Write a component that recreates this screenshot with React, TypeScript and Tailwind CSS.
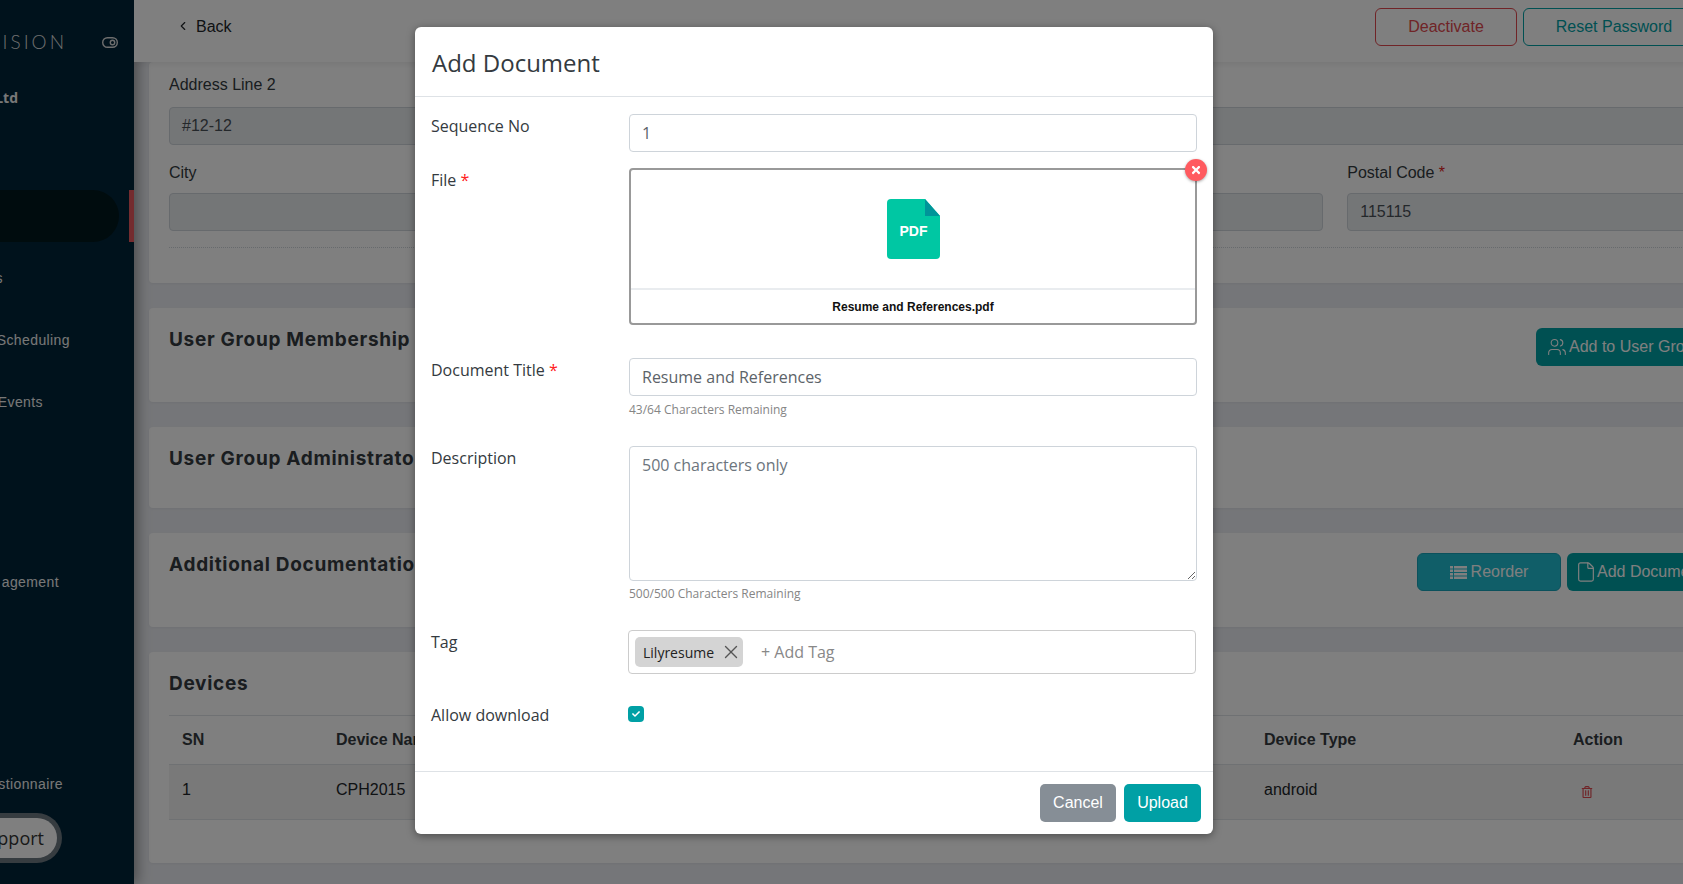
import { ChevronLeft, File, Users, X } from "lucide-react";
import { FaCheck, FaRegTrashAlt, FaTimes } from "react-icons/fa";

const sans = "font-['Liberation_Sans',Arial,sans-serif]";
const open = "font-['Open_Sans',sans-serif]";
const heading = "font-['Inter',sans-serif] font-bold text-[19px] tracking-[0.7px] text-[#343a40]";
const tableCols = "grid-cols-[154px_928px_309px_1fr]";

const SideItem = ({ label, className }: { label: string; className: string }) => (
    <div className={`flex justify-end whitespace-nowrap text-[14px] tracking-[0.4px] text-[#f0f0f0] ${className}`}>
        {label}
    </div>
);

const Sidebar = () => (
    <aside className={`w-[134px] shrink-0 h-full bg-[#002438] overflow-hidden flex flex-col ${sans} shadow-[4px_0_12px_rgba(0,0,0,0.35)] relative`}>
        <div className="h-[62px] pt-[22px] flex justify-end items-center gap-[35px] pr-[16px] text-[#ddd]">
            <span className="font-['Lato',sans-serif] font-light text-[19px] leading-[26px] tracking-[3px] whitespace-nowrap">
                VISION
            </span>
            <svg className="shrink-0" width="16" height="11" viewBox="0 0 16 11" fill="none" stroke="currentColor" strokeWidth="1.4">
                <rect x="0.7" y="0.7" width="14.6" height="9.6" rx="4.8" />
                <circle cx="10.5" cy="5.5" r="2.2" />
            </svg>
        </div>
        <div className="flex justify-end pr-[116px] mt-[26px] font-['Open_Sans',sans-serif] font-bold text-[14px] text-[#f0f0f0] leading-5 whitespace-nowrap">
            Ltd
        </div>
        <div className="mt-[82px] h-[52px] flex shrink-0">
            <div className="w-[119px] h-full rounded-r-[26px] bg-[#00181c]" />
            <div className="ml-[10px] w-[5px] h-full bg-[#e8585e]" />
        </div>
        <SideItem label="s" className="mt-[26px] pr-[131px] leading-5" />
        <SideItem label="Scheduling" className="mt-[42px] pr-[64px] leading-5" />
        <SideItem label="Events" className="mt-[42px] pr-[91px] leading-5" />
        <SideItem label="agement" className="mt-[160px] pr-[75px] leading-5" />
        <SideItem label="stionnaire" className="mt-[182px] pr-[71px] leading-5" />
    </aside>
);

const Field = ({ label, value, required }: { label?: string; value?: string; required?: boolean }) => (
    <div>
        <div className="h-6 leading-6 mb-[8px] text-[16px] text-[#333a40]">
            {label}
            {required && <span className="text-[#e02020]"> *</span>}
        </div>
        <div className="h-[38px] rounded-[4px] border border-[#ced4da] bg-[#e9ecef] px-3 leading-[36px] text-[16px] text-[#495057]">
            {value}
        </div>
    </div>
);

const Card = ({ className, children }: { className: string; children: React.ReactNode }) => (
    <section className={`w-[1587px] ml-[15px] bg-white rounded-[4px] px-5 shadow-[0_1px_3px_rgba(0,0,0,0.05)] ${className}`}>
        {children}
    </section>
);

const ReorderIcon = () => (
    <svg width="17" height="13" viewBox="0 0 17 13" fill="currentColor">
        <path d="M0 0h3v2.5H0zM4 0h13v2.5H4zM0 3.5h3V6H0zM4 3.5h13V6H4zM0 7h3v2.5H0zM4 7h13v2.5H4zM0 10.5h3V13H0zM4 10.5h13V13H4z" />
    </svg>
);

const Main = () => (
    <main className={`flex-1 min-w-0 overflow-hidden h-full bg-[#ebedf2] ${sans}`}>
        <header className="w-[1571px] h-[62px] bg-white flex items-center justify-between shadow-[0_2px_6px_rgba(0,0,0,0.08)] relative">
            <div className="flex items-center ml-[42px] mt-[-8px] text-[16px] text-[#212529]">
                <ChevronLeft size={14} strokeWidth={2} className="mr-[6px] -mt-[3px]" />
                Back
            </div>
            <div className="flex gap-[6px] -mt-[9px] text-[16px]">
                <div className="w-[142px] h-[38px] rounded-[6px] border border-[#e0484e] text-[#e0484e] flex items-center justify-center">
                    Deactivate
                </div>
                <div className="w-[182px] h-[38px] rounded-[6px] border border-[#00a0a5] text-[#00a0a5] flex items-center justify-center">
                    Reset Password
                </div>
            </div>
        </header>

        <Card className="h-[221px] pt-[11px]">
            <div className="h-6 leading-6 mb-[10px] text-[16px] text-[#333a40]">Address Line 2</div>
            <div className="h-[38px] rounded-[4px] border border-[#ced4da] bg-[#e9ecef] px-3 leading-[36px] text-[16px] text-[#495057]">
                #12-12
            </div>
            <div className="grid grid-cols-4 gap-x-6 mt-[16px]">
                <Field label="City" />
                <Field />
                <Field />
                <Field label="Postal Code" value="115115" required />
            </div>
            <div className="mt-[16px] border-t border-dotted border-[#ced4da]" />
        </Card>

        <Card className="mt-[25px] h-[94px] pt-[18px] flex justify-between">
            <h2 className={heading}>User Group Membership</h2>
            <div className="w-[180px] h-[38px] mt-[2px] rounded-[6px] bg-[#00a0a5] text-white text-[16px] flex items-center gap-[2px] pl-[11px] whitespace-nowrap overflow-hidden">
                <Users size={20} strokeWidth={1.3} className="shrink-0" />
                Add to User Group
            </div>
        </Card>

        <Card className="mt-[25px] h-[81px] pt-[18px]">
            <h2 className={heading}>User Group Administrator</h2>
        </Card>

        <Card className="mt-[25px] h-[94px] pt-[18px] flex justify-between">
            <h2 className={heading}>Additional Documentation</h2>
            <div className="flex gap-[6px] mt-[2px] text-white text-[16px]">
                <div className="w-[144px] h-[38px] rounded-[6px] bg-[#21bcd0] border border-[#17a2b8] flex items-center justify-center gap-[4px]">
                    <ReorderIcon />
                    Reorder
                </div>
                <div className="w-[149px] h-[38px] rounded-[6px] bg-[#00a0a5] flex items-center pl-[8px] whitespace-nowrap">
                    <File size={22} strokeWidth={1.3} className="shrink-0" />
                    Add Document
                </div>
            </div>
        </Card>

        <Card className="mt-[25px] h-[211px] pt-[18px]">
            <h2 className={heading}>Devices</h2>
            <div className="mt-[16px] border-t border-[#dee2e6]">
                <div className={`grid ${tableCols} h-[48px] items-center pl-[13px] font-bold text-[16px] text-[#343a40]`}>
                    <span>SN</span>
                    <span>Device Name</span>
                    <span>Device Type</span>
                    <span>Action</span>
                </div>
                <div className={`grid ${tableCols} h-[56px] items-center pl-[13px] bg-[#f2f2f2] border-y border-[#dee2e6] text-[16px] text-[#212529]`}>
                    <span className="-mt-[4px]">1</span>
                    <span className="-mt-[4px]">CPH2015</span>
                    <span className="-mt-[4px]">android</span>
                    <span className="pl-[8px] text-[#e0484e]">
                        <FaRegTrashAlt size={12} />
                    </span>
                </div>
            </div>
        </Card>
    </main>
);

const Required = () => <span className="text-[#ff2020]"> *</span>;

const FormRow = ({ label, required, className, children }: { label: string; required?: boolean; className?: string; children: React.ReactNode }) => (
    <div className={`grid grid-cols-[198px_1fr] ${className ?? ""}`}>
        <label className="leading-6 text-[16px] text-[#343a40]">
            {label}
            {required && <Required />}
        </label>
        <div>{children}</div>
    </div>
);

const inputClass = "block w-full h-[38px] rounded-[4px] border border-[#ced4da] px-3 text-[16px] text-[#5c6369] outline-none";

const Modal = () => (
    <div className={`absolute left-[415px] top-[27px] w-[798px] h-[807px] bg-white rounded-[6px] shadow-[0_2px_8px_rgba(0,0,0,0.4)] flex flex-col ${open}`}>
        <div className="h-[70px] shrink-0 border-b border-[#dee2e6] flex items-center pl-[17px] pt-[2px] text-[24px] text-[#343a40]">
            Add Document
        </div>
        <div className="flex-1 pt-[17px] pl-4 pr-4">
            <FormRow label="Sequence No">
                <input className={inputClass} defaultValue="1" />
            </FormRow>
            <FormRow label="File" required className="mt-4">
                <div className="relative h-[157px] rounded-[4px] border-2 border-[#999] flex flex-col">
                    <div className="flex-1 flex items-center justify-center pb-[1px] border-b-2 border-[#e9ecef]">
                        <svg width="53" height="60" viewBox="0 0 53 60">
                            <path d="M4 0H38L53 17V56a4 4 0 0 1-4 4H4a4 4 0 0 1-4-4V4a4 4 0 0 1 4-4Z" fill="#00c7a3" />
                            <path d="M38 0L53 17H38Z" fill="#009499" />
                            <text x="26.5" y="37" textAnchor="middle" fill="#fff" fontSize="14" fontWeight="700" fontFamily="Liberation Sans, Arial, sans-serif">
                                PDF
                            </text>
                        </svg>
                    </div>
                    <div className={`h-[33px] flex items-center justify-center text-[12px] font-bold text-[#111] ${sans}`}>
                        Resume and References.pdf
                    </div>
                    <div className="absolute -right-[12px] -top-[11px] w-[22px] h-[22px] rounded-full bg-[#ff5a5f] text-white flex items-center justify-center shadow-[0_1px_3px_rgba(0,0,0,0.35)]">
                        <FaTimes size={12} />
                    </div>
                </div>
            </FormRow>
            <FormRow label="Document Title" required className="mt-[33px]">
                <input className={inputClass} defaultValue="Resume and References" />
                <div className="mt-[5px] leading-[18px] text-[12px] text-[#858585]">43/64 Characters Remaining</div>
            </FormRow>
            <FormRow label="Description" className="mt-[27px]">
                <textarea
                    className="block w-full h-[135px] rounded-[4px] border border-[#ced4da] px-3 py-[6px] text-[16px] text-[#5c6369] placeholder:text-[#6c757d] outline-none"
                    placeholder="500 characters only"
                />
                <div className="mt-[4px] leading-[18px] text-[12px] text-[#858585]">500/500 Characters Remaining</div>
            </FormRow>
            <FormRow label="Tag" className="mt-[27px]">
                <div className="h-[44px] -ml-px mr-px rounded-[4px] border border-[#cccccc] flex items-center pl-[6px]">
                    <div className="w-[108px] h-[30px] rounded-[5px] bg-[#d4d4d4] flex items-center justify-between pl-[8px] pr-[1px] text-[14px] text-[#222]">
                        Lilyresume
                        <X size={22} strokeWidth={1.5} className="text-[#555]" />
                    </div>
                    <span className="ml-[18px] text-[16px] text-[#888]">+ Add Tag</span>
                </div>
            </FormRow>
            <FormRow label="Allow download" className="mt-[29px]">
                <div className="-ml-px mt-[3px] w-4 h-4 rounded-[4px] bg-[#00a0a5] text-white flex items-center justify-center">
                    <FaCheck size={8} />
                </div>
            </FormRow>
        </div>
        <div className={`h-[63px] shrink-0 border-t border-[#dee2e6] flex justify-end gap-2 pt-3 pr-3 text-white text-[16px] ${sans}`}>
            <div className="w-[76px] h-[38px] rounded-[5px] bg-[#868e96] flex items-center justify-center">Cancel</div>
            <div className="w-[77px] h-[38px] rounded-[5px] bg-[#00a0a5] flex items-center justify-center">Upload</div>
        </div>
    </div>
);

const App = () => (
    <div className="relative w-[1683px] h-[884px] overflow-hidden flex">
        <Sidebar />
        <Main />
        <div className={`absolute right-[1621px] top-[813px] h-[50px] rounded-r-[25px] border-[5px] border-l-0 border-[#6c7880] bg-white flex items-center pr-[13px] text-[18px] text-[#333] whitespace-nowrap ${open}`}>
            pport
        </div>
        <div className="absolute inset-0 bg-black/50" />
        <Modal />
    </div>
);

export default App;
